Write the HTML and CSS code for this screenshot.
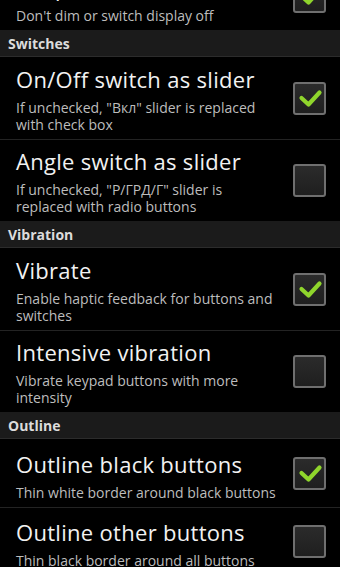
FILE: index.html
```html
<!DOCTYPE html>
<html lang="en">
<head>
    <meta charset="UTF-8">
    <meta name="viewport" content="width=device-width, initial-scale=1.0">
    <title>Settings</title>
    <link rel="stylesheet" href="styles.css">
</head>
<body>
    <div class="screen">
        <div class="pref-list scrolled">
            <div class="pref-item">
                <div class="pref-text">
                    <div class="pref-title">Keep screen on</div>
                    <div class="pref-summary">Don't dim or switch display off</div>
                </div>
                <div class="checkbox checked"></div>
            </div>

            <div class="pref-category">Switches</div>
            <div class="pref-item">
                <div class="pref-text">
                    <div class="pref-title">On/Off switch as slider</div>
                    <div class="pref-summary">If unchecked, "Вкл" slider is replaced with check box</div>
                </div>
                <div class="checkbox checked"></div>
            </div>
            <div class="pref-item">
                <div class="pref-text">
                    <div class="pref-title">Angle switch as slider</div>
                    <div class="pref-summary">If unchecked, "Р/ГРД/Г" slider is replaced with radio buttons</div>
                </div>
                <div class="checkbox"></div>
            </div>

            <div class="pref-category">Vibration</div>
            <div class="pref-item">
                <div class="pref-text">
                    <div class="pref-title">Vibrate</div>
                    <div class="pref-summary">Enable haptic feedback for buttons and switches</div>
                </div>
                <div class="checkbox checked"></div>
            </div>
            <div class="pref-item">
                <div class="pref-text">
                    <div class="pref-title">Intensive vibration</div>
                    <div class="pref-summary">Vibrate keypad buttons with more intensity</div>
                </div>
                <div class="checkbox"></div>
            </div>

            <div class="pref-category">Outline</div>
            <div class="pref-item">
                <div class="pref-text">
                    <div class="pref-title">Outline black buttons</div>
                    <div class="pref-summary">Thin white border around black buttons</div>
                </div>
                <div class="checkbox checked"></div>
            </div>
            <div class="pref-item">
                <div class="pref-text">
                    <div class="pref-title">Outline other buttons</div>
                    <div class="pref-summary">Thin black border around all buttons</div>
                </div>
                <div class="checkbox"></div>
            </div>
        </div>
    </div>

    <script>
        // Draw the green tick inside every checked box
        const tick = '<svg viewBox="0 0 33 33" width="33" height="33">' +
            '<path d="M8.5 16 L15.5 22.5 L26.5 10.5" fill="none" stroke="#8fd52c" ' +
            'stroke-width="4.2" stroke-linecap="round" stroke-linejoin="round"/></svg>';
        document.querySelectorAll('.checkbox.checked').forEach(box => {
            box.innerHTML = tick;
        });
    </script>
</body>
</html>
```

FILE: styles.css
```css
html, body {
    margin: 0;
    padding: 0;
    background: #000000;
}
body {
    font-family: "Open Sans", "Noto Sans", "DejaVu Sans", sans-serif;
    color: #f0f0f0;
}
.screen {
    width: 340px;
    height: 567px;
    overflow: hidden;
}
.pref-list {
    display: flex;
    flex-direction: column;
}
.scrolled {
    margin-top: -38px; /* list is scrolled a bit */
}
.pref-category {
    height: 26px;
    line-height: 27px;
    padding-left: 8px;
    background: #1b1b1b;
    border-bottom: 1px solid #2c2c2c;
    color: #dcdcdc;
    font-size: 14px;
    font-weight: bold;
}
.pref-item {
    display: flex;
    box-sizing: border-box;
    min-height: 68px;
    padding: 0 14px 0 16px;
}
.pref-item + .pref-item {
    border-top: 1px solid #232323;
}
.pref-text {
    flex-grow: 1;
    min-width: 0;
    align-self: flex-end;
    padding: 9px 0 6px;
}
.pref-item + .pref-item .pref-text {
    padding-top: 8px;
}
.pref-title {
    font-size: 22px;
    line-height: 26px;
    letter-spacing: 0.3px;
    color: #f2f2f2;
    white-space: nowrap;
}
.pref-summary {
    margin-top: 7px;
    font-size: 14px;
    line-height: 17px;
    color: #bdbdbd;
    padding-right: 12px;
}
.checkbox {
    flex-shrink: 0;
    align-self: center;
    width: 29px;
    height: 29px;
    border: 2px solid #6f6f6f;
    border-radius: 3px;
    background: linear-gradient(to bottom, #2b2b2b, #1f1f1f);
    position: relative;
}
.checkbox svg {
    position: absolute;
    left: -2px;
    top: -2px;
}
```
